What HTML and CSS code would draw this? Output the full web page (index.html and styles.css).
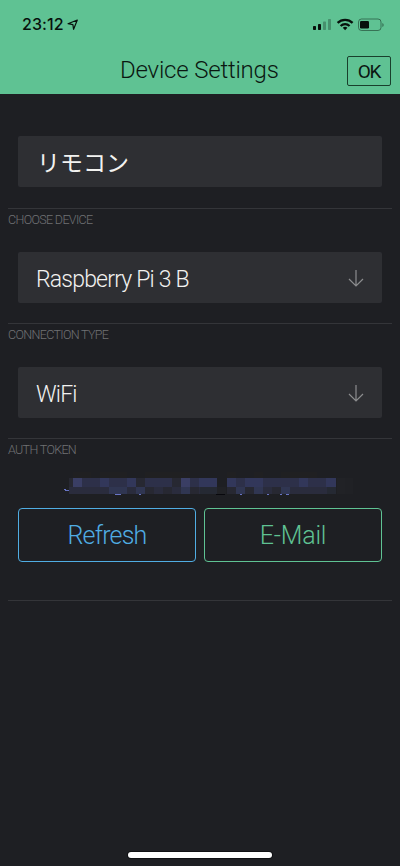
FILE: index.html
```html
<!DOCTYPE html>
<html lang="ja">
<head>
<meta charset="utf-8">
<title>Device Settings</title>
<link rel="stylesheet" href="styles.css">
</head>
<body>
<header class="header">
  <div class="status">
    <span class="time">23:12</span>
    <svg class="location" width="12" height="12" viewBox="0 0 12 12"><path d="M1 4.7 10.3 1 6.6 10.3 5.9 5.6Z" fill="none" stroke="#07110c" stroke-width="1.2" stroke-linejoin="round"/></svg>
    <svg class="indicators" width="74" height="16" viewBox="0 0 74 16">
      <g fill="#07110c">
        <rect x="1" y="9" width="3" height="4" rx=".7"/><rect x="6" y="7" width="3" height="6" rx=".7"/>
        <g opacity=".28"><rect x="11" y="4.5" width="3" height="8.5" rx=".7"/><rect x="16" y="2" width="3" height="11" rx=".7"/></g>
      </g>
      <g fill="none" stroke="#07110c" stroke-width="2.2"><path d="M25.6 5.9a10.6 10.6 0 0 1 15 0"/><path d="M28.6 9a6.4 6.4 0 0 1 9 0"/></g>
      <path d="M30.8 10.8a3.4 3.4 0 0 1 4.6 0l-2.3 2.5Z" fill="#07110c"/>
      <rect x="46.5" y="2" width="22.5" height="11.5" rx="3" fill="none" stroke="#07110c" opacity=".45"/>
      <rect x="48" y="4" width="9" height="7.5" rx="1.3" fill="#07110c"/>
      <path d="M70.3 6v4q1.4-.5 1.4-2t-1.4-2" fill="#07110c" opacity=".45"/>
    </svg>
  </div>
  <div class="titlebar"><h1 class="title">Device Settings</h1><button class="ok">OK</button></div>
</header>
<main class="settings">
  <section class="group">
    <div class="field name">リモコン</div>
  </section>
  <section class="group ruled">
    <h2 class="label">CHOOSE DEVICE</h2>
    <div class="field"><span class="device">Raspberry Pi 3 B</span><svg class="arrow" width="16" height="18" viewBox="0 0 16 18"><path d="M8 1v16M1 10l7 7 7-7"/></svg></div>
  </section>
  <section class="group ruled">
    <h2 class="label connection">CONNECTION TYPE</h2>
    <div class="field"><span class="wifi">WiFi</span><svg class="arrow" width="16" height="18" viewBox="0 0 16 18"><path d="M8 1v16M1 10l7 7 7-7"/></svg></div>
  </section>
  <section class="token ruled">
    <h2 class="label auth">AUTH TOKEN</h2>
    <svg class="mosaic" width="290" height="24" viewBox="64 472 290 24" shape-rendering="crispEdges">
      <path fill="#202022" d="M73 472h18v6h-18zM100 472h27v6h-27zM145 472h45v6h-45zM227 472h9v6h-9zM254 472h9v6h-9zM281 472h36v6h-36z"/>
      <path fill="#2d3049" d="M73 478h144v9h-144zM227 478h109v9h-109z"/>
      <path fill="#2a2c3d" d="M69 487h148v7h-148zM227 487h109v7h-109z"/>
      <path fill="#3a3e64" d="M73 478h9v9h-9zM181 478h9v9h-9z"/>
      <path fill="#32375a" d="M100 478h9v9h-9zM127 478h9v9h-9zM199 478h18v9h-18zM227 478h9v9h-9zM245 478h18v9h-18zM299 478h9v9h-9zM326 478h10v9h-10z"/>
      <path fill="#272832" d="M69 478h4v9h-4zM136 478h9v9h-9zM172 478h9v9h-9zM145 487h9v7h-9zM163 487h9v7h-9zM190 487h9v7h-9zM227 487h9v7h-9zM245 487h9v7h-9zM272 487h9v7h-9z"/>
      <path fill="#303652" d="M109 487h18v7h-18zM136 487h9v7h-9zM181 487h9v7h-9zM236 487h9v7h-9zM254 487h9v7h-9zM281 487h9v7h-9z"/>
      <path fill="#252933" d="M200 487h17v7h-17zM327 487h9v7h-9z"/>
      <path fill="#212226" d="M217 487h9v7h-9zM337 478h8v16h-8z"/>
      <path fill="#202125" d="M345 478h8v16h-8z"/>
      <path fill="#08080d" d="M216 494h9v1h-9z"/>
      <path fill="#6874c5" d="M64 489h2v1h3v1h-4v-1h-1zM115 494h6v1h-6zM139 494h2v1h-2zM240 494h2v1h-2zM267 494h2v1h-2zM280 494h2v1h-2zM286 494h3v1h-3z"/>
    </svg>
    <div class="actions"><button class="action refresh"><span>Refresh</span></button><button class="action email"><span>E-Mail</span></button></div>
  </section>
  <hr class="end">
</main>
<div class="home"></div>
</body>
</html>
```
FILE: styles.css
```css
* { box-sizing: border-box; }
body {
  margin: 0;
  height: 866px;
  display: flex;
  flex-direction: column;
  overflow: hidden;
  background: #1e1f23;
  color: #f2f2f0;
  font-family: Roboto, "Noto Sans CJK JP", sans-serif;
  font-weight: 300;
}
button { background: none; font: inherit; margin: 0; padding: 0; }
.header { height: 94px; background: #5fc293; color: #0b1711; }
.status { height: 48px; padding: 16px 14px 0 22px; display: flex; align-items: flex-start; }
.time { font: 500 16px/17px Inter, sans-serif; letter-spacing: .1px; color: #07110c; }
.location { margin: 3px 0 0 3px; }
.indicators { margin: 1px 0 0 auto; }
.titlebar { height: 46px; padding: 0 9px 0 120px; display: flex; align-items: flex-start; justify-content: space-between; }
.title { margin: 7px 0 0; font-size: 24px; line-height: 30px; font-weight: 300; letter-spacing: -.2px; white-space: nowrap; }
.ok { width: 44px; height: 30px; margin-top: 8px; border: 1px solid #193f2c; border-radius: 2px; color: #0b1711; font-size: 19px; line-height: 29px; font-weight: 400; letter-spacing: -1.3px; }
.settings { padding: 21px 8px 0; }
.group { height: 115px; }
.group:first-child { height: 93px; padding-top: 21px; }
.ruled { border-top: 1px solid #343539; }
.field { height: 51px; margin: 0 10px; padding: 4px 18px 0; display: flex; align-items: center; background: #2e2f33; border-radius: 2px; font-size: 23px; white-space: nowrap; }
.label { height: 43px; margin: 0; padding-top: 3px; font-size: 12.5px; line-height: 16px; font-weight: 300; letter-spacing: -.66px; color: #707174; }
.field.name { font-size: 23px; padding: 0 19px 2px; font-weight: 400; }
.device { letter-spacing: -.8px; }
.wifi { letter-spacing: -.8px; }
.arrow { margin: -4px 0 0 auto; fill: none; stroke: #8c8d8f; stroke-width: 1.2; }
.token { height: 161.5px; }
.auth { height: 33px; }
.mosaic { display: block; margin-left: 56px; }
.actions { display: grid; grid-template-columns: 1fr 1fr; gap: 8px; margin: 12px 10px 0; }
.action { height: 54px; border: 1.5px solid; border-radius: 4px; font-size: 25px; }
.refresh { color: #50ade3; letter-spacing: -.8px; }
.email { color: #5fc293; letter-spacing: -.2px; }
.end { height: 1px; margin: 0; border: 0; background: #343539; }
.home { width: 144px; height: 6px; margin: auto auto 8px; border-radius: 3px; background: #fff; box-shadow: 0 0 0 1px #101114; }
```
